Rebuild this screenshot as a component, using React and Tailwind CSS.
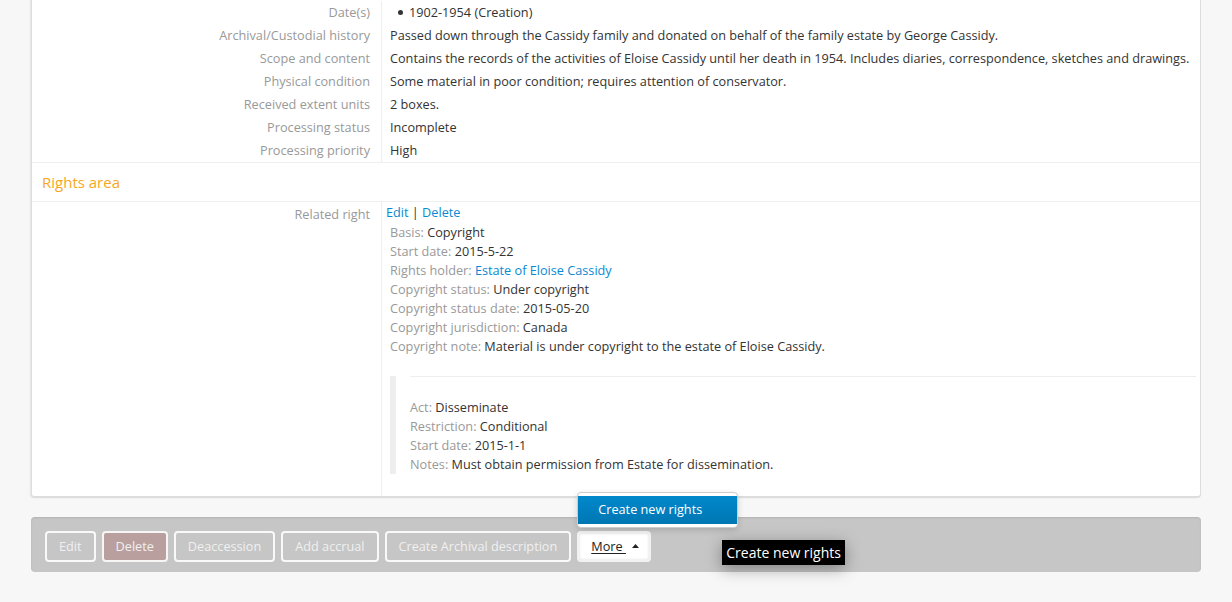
import React from 'react';

const fields = [
  { label: 'Archival/Custodial history', value: 'Passed down through the Cassidy family and donated on behalf of the family estate by George Cassidy.' },
  { label: 'Scope and content', value: 'Contains the records of the activities of Eloise Cassidy until her death in 1954. Includes diaries, correspondence, sketches and drawings.' },
  { label: 'Physical condition', value: 'Some material in poor condition; requires attention of conservator.' },
  { label: 'Received extent units', value: '2 boxes.' },
  { label: 'Processing status', value: 'Incomplete' },
  { label: 'Processing priority', value: 'High' },
];

const rightDetails = [
  { label: 'Basis', value: 'Copyright' },
  { label: 'Start date', value: '2015-5-22' },
  { label: 'Rights holder', value: 'Estate of Eloise Cassidy', link: true },
  { label: 'Copyright status', value: 'Under copyright' },
  { label: 'Copyright status date', value: '2015-05-20' },
  { label: 'Copyright jurisdiction', value: 'Canada' },
  { label: 'Copyright note', value: 'Material is under copyright to the estate of Eloise Cassidy.' },
];

const grantedRights = [
  { label: 'Act', value: 'Disseminate' },
  { label: 'Restriction', value: 'Conditional' },
  { label: 'Start date', value: '2015-1-1' },
  { label: 'Notes', value: 'Must obtain permission from Estate for dissemination.' },
];

const Field = ({ label, children }) => (
  <div className="flex">
    <div className="w-[350px] shrink-0 border-r border-[#eee] pr-[11px] text-right text-[#999] leading-[23px]">
      {label}
    </div>
    <div className="flex-1 whitespace-nowrap pl-[8px] text-[#333] leading-[23px]">{children}</div>
  </div>
);

const Detail = ({ label, value, link }) => (
  <div className="leading-[19px]">
    <span className="text-[#999]">{label}: </span>
    <span className={link ? 'text-[#0a8ad1]' : 'text-[#333]'}>{value}</span>
  </div>
);

const ActionButton = ({ children, className = '' }) => (
  <button className={`h-[31px] rounded-[4px] border-2 border-white/90 px-3 text-[12.7px] text-[#f0f0f0] ${className}`}>
    {children}
  </button>
);

export default function App() {
  return (
    <div
      className="min-h-[602px] bg-[#f7f7f7] text-[12.7px]"
      style={{ fontFamily: '"Open Sans", "Liberation Sans", sans-serif' }}
    >
      {/* Record card */}
      <div className="mx-[31px] rounded-b-[4px] border-x border-b-2 border-[#ddd] bg-white pt-[1px] shadow-[-1px_0_2px_rgba(0,0,0,0.08)]">
        <Field label="Date(s)">
          <div className="flex items-center pl-[8px]">
            <span className="mr-[6px] h-[5px] w-[5px] rounded-full bg-[#333]" />
            <span>1902-1954 (Creation)</span>
          </div>
        </Field>
        {fields.map((f) => (
          <Field key={f.label} label={f.label}>
            {f.value}
          </Field>
        ))}

        {/* Rights area header */}
        <div className="h-[40px] border-y border-[#eee] pl-[10px] text-[15px] leading-[38px] text-[#f5a81e]">
          Rights area
        </div>

        {/* Related right */}
        <div className="flex">
          <div className="w-[350px] shrink-0 border-r border-[#eee] pr-[11px] pt-[1px] text-right text-[#999] leading-[23px]">
            Related right
          </div>
          <div className="flex-1 pb-[22px] pl-[4px] pr-[4px]">
            <div className="leading-[20px] text-[#0a8ad1]">
              Edit <span className="text-[#333]">|</span> Delete
            </div>
            <div className="pl-[4px] pt-[1px]">
              {rightDetails.map((d) => (
                <Detail key={d.label} {...d} />
              ))}
              <div className="mt-[20px] border-l-[6px] border-[#eee] pl-[14px]">
                <div className="border-t border-[#eee] pt-[21px]">
                  {grantedRights.map((d) => (
                    <Detail key={d.label} {...d} />
                  ))}
                </div>
              </div>
            </div>
          </div>
        </div>
      </div>

      {/* Actions toolbar */}
      <div className="mx-[31px] mt-[19px] flex h-[55px] items-start gap-[6px] rounded-[4px] bg-[#c6c6c6] px-[14px] pt-[14px] shadow-[inset_0_1px_2px_rgba(0,0,0,0.1)]">
        <ActionButton>Edit</ActionButton>
        <ActionButton className="bg-[#b9a09f]">Delete</ActionButton>
        <ActionButton>Deaccession</ActionButton>
        <ActionButton>Add accrual</ActionButton>
        <ActionButton>Create Archival description</ActionButton>
        <div className="relative h-[31px]">
          <button className="flex h-[31px] items-center gap-[6px] rounded-[4px] border-2 border-[#f2f2f2] bg-white pl-[12px] pr-[10px] text-[12.7px] text-[#222] shadow-[inset_0_0_3px_rgba(0,0,0,0.15)]">
            <span className="underline underline-offset-2">More&nbsp;</span>
            <svg width="7" height="4" viewBox="0 0 7 4" className="mt-[-2px]">
              <path d="M0 4 L3.5 0 L7 4 Z" fill="#222" />
            </svg>
          </button>
          {/* Dropdown menu */}
          <div className="absolute bottom-[34px] left-0 w-[161px] rounded-[4px] border border-[#ccc] bg-white py-[3px] shadow-[0_2px_6px_rgba(0,0,0,0.15)]">
            <div className="h-[28px] bg-gradient-to-b from-[#0088cc] to-[#0077b3] pl-[20px] leading-[27px] text-white">
              Create new rights
            </div>
          </div>
          {/* Tooltip */}
          <div className="absolute left-[145px] top-[9px] whitespace-nowrap bg-black px-[4px] text-[14px] leading-[25px] text-white shadow-[0_4px_16px_rgba(0,0,0,0.35)]">
            Create new rights
          </div>
        </div>
      </div>
    </div>
  );
}
